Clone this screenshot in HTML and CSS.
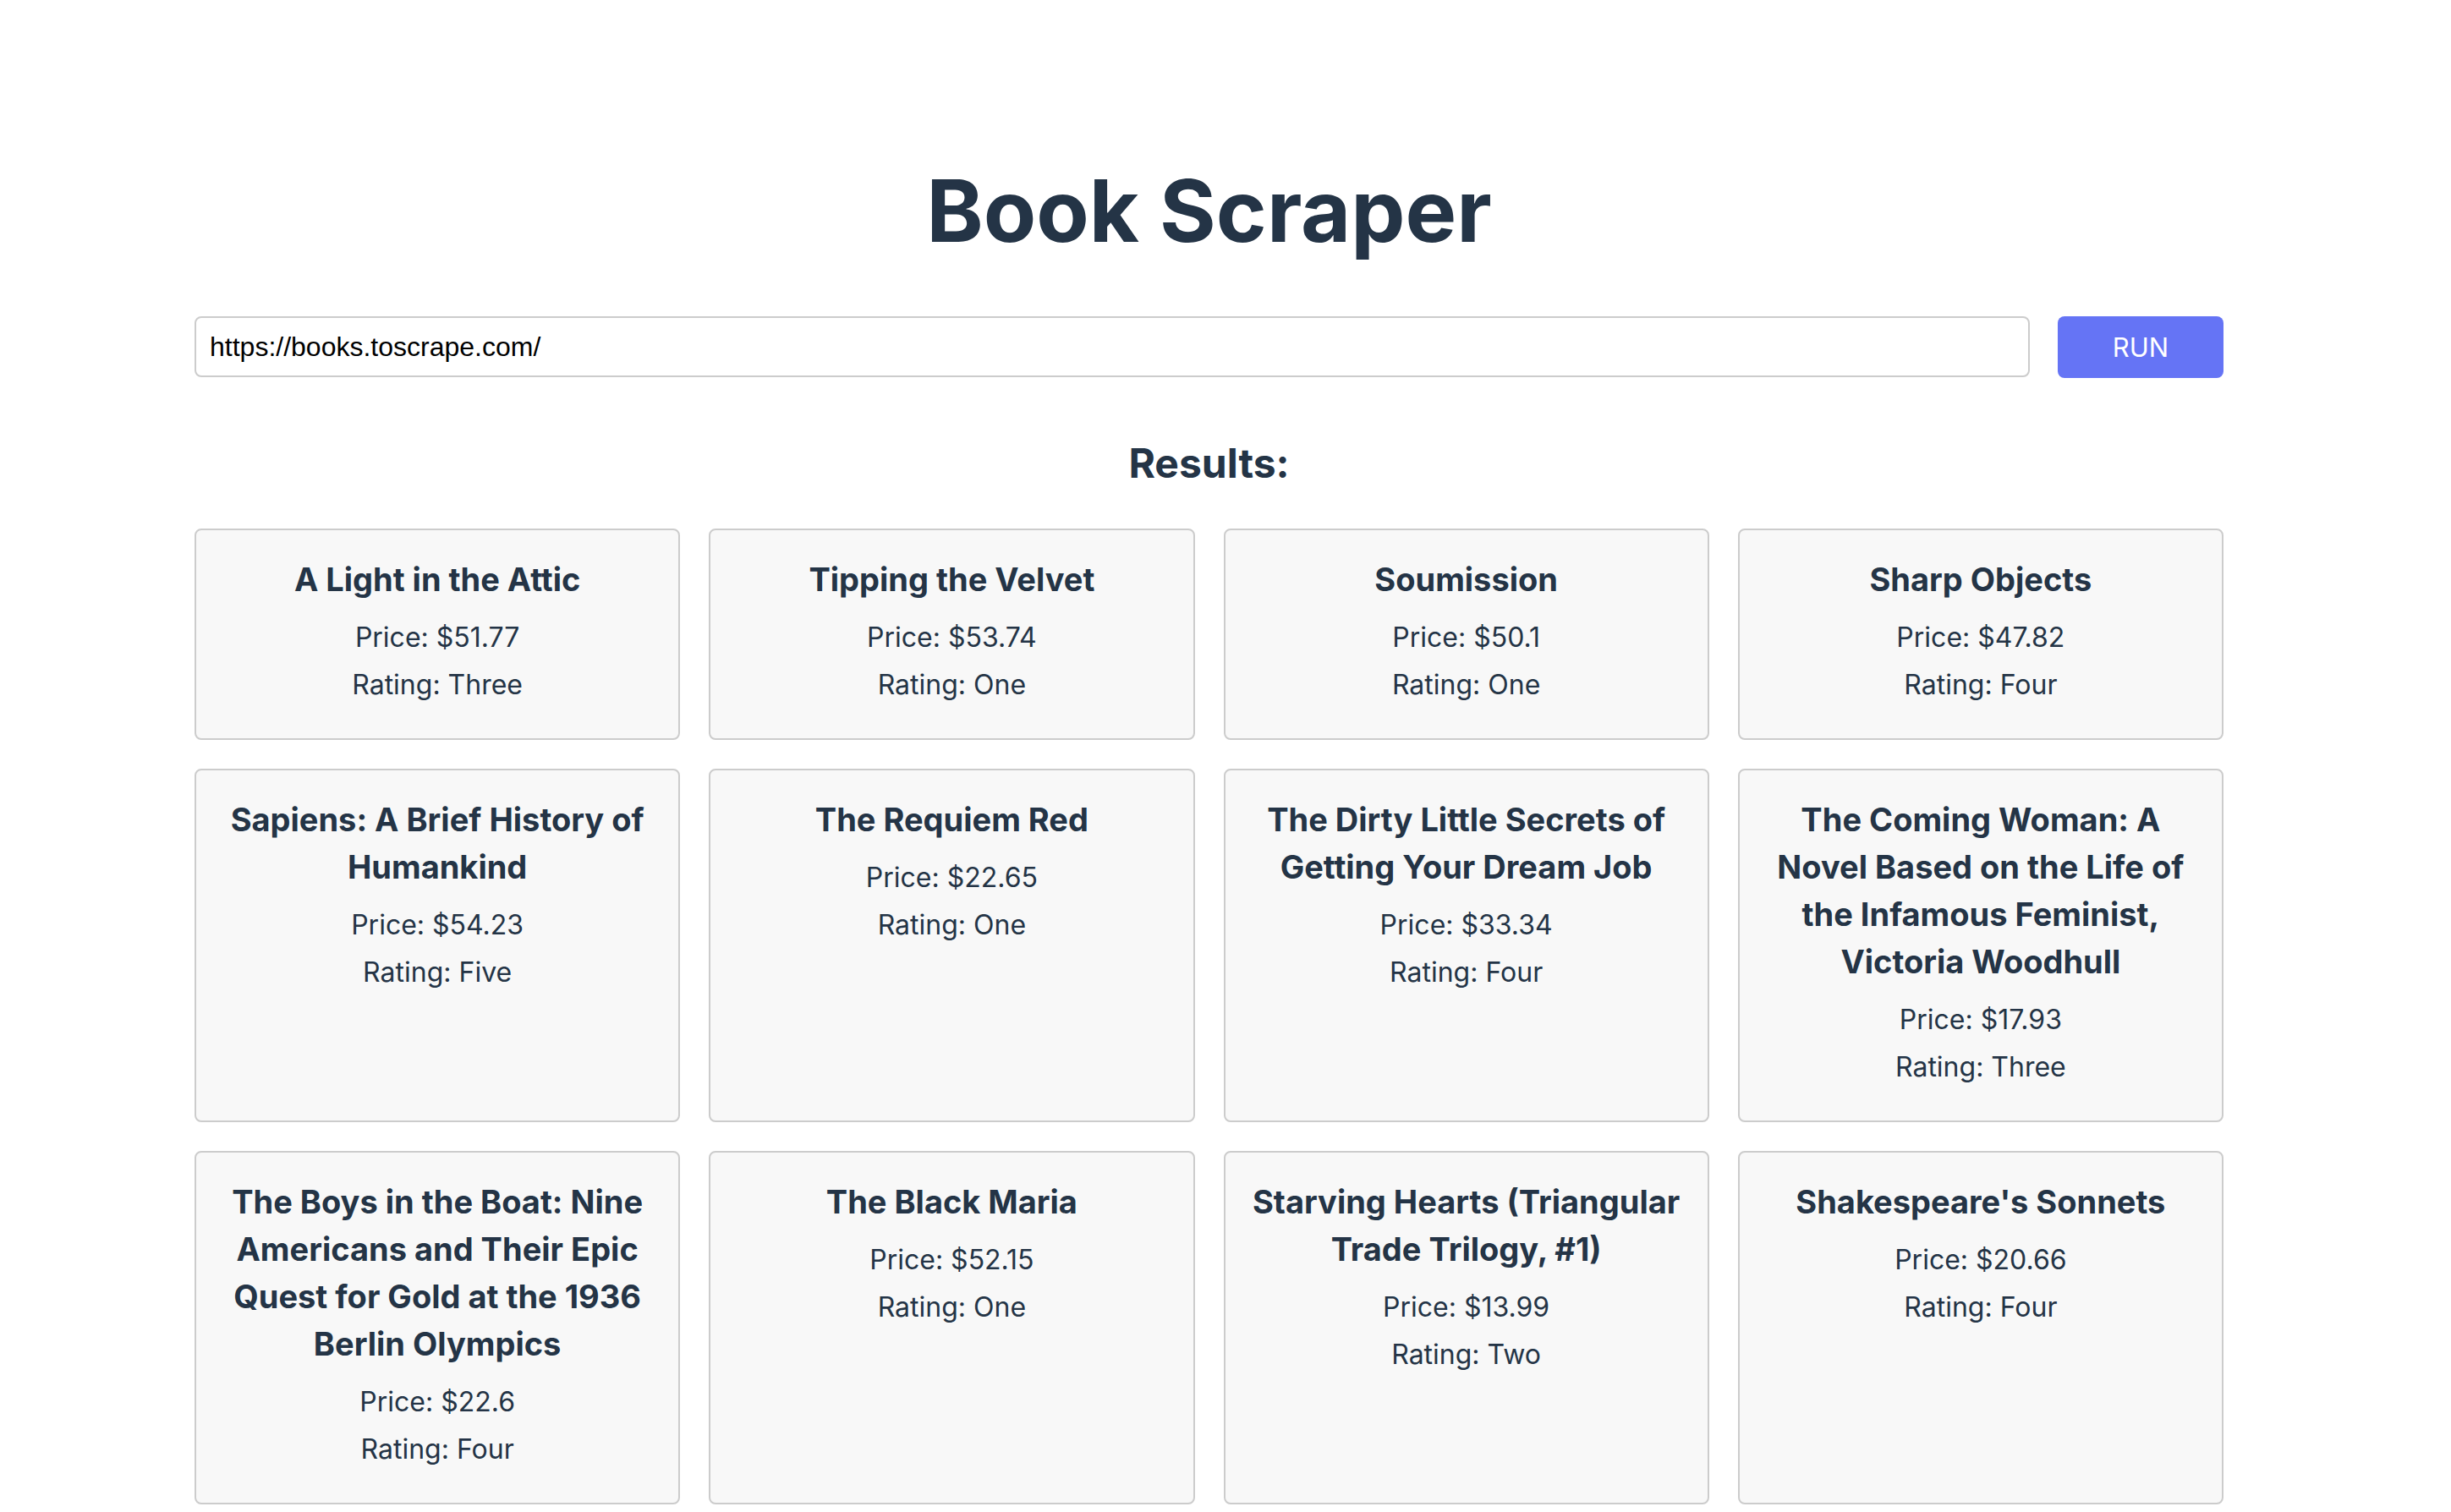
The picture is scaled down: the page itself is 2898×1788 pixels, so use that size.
FILE: index.html
```html
<!DOCTYPE html>
<html lang="en">
<head>
<meta charset="utf-8">
<title>Book Scraper</title>
<link rel="stylesheet" href="styles.css">
</head>
<body>
<main class="app">
  <h1 class="title">Book Scraper</h1>
  <form class="search" onsubmit="return false">
    <input class="url" type="text" value="https://books.toscrape.com/">
    <button class="run" type="submit">RUN</button>
  </form>
  <h2 class="results-title">Results:</h2>
  <section class="grid">
    <article class="card"><h3>A Light in the Attic</h3><p>Price: $51.77</p><p>Rating: Three</p></article>
    <article class="card"><h3>Tipping the Velvet</h3><p>Price: $53.74</p><p>Rating: One</p></article>
    <article class="card"><h3>Soumission</h3><p>Price: $50.1</p><p>Rating: One</p></article>
    <article class="card"><h3>Sharp Objects</h3><p>Price: $47.82</p><p>Rating: Four</p></article>
    <article class="card"><h3>Sapiens: A Brief History of Humankind</h3><p>Price: $54.23</p><p>Rating: Five</p></article>
    <article class="card"><h3>The Requiem Red</h3><p>Price: $22.65</p><p>Rating: One</p></article>
    <article class="card"><h3>The Dirty Little Secrets of Getting Your Dream Job</h3><p>Price: $33.34</p><p>Rating: Four</p></article>
    <article class="card"><h3>The Coming Woman: A Novel Based on the Life of the Infamous Feminist, Victoria Woodhull</h3><p>Price: $17.93</p><p>Rating: Three</p></article>
    <article class="card"><h3>The Boys in the Boat: Nine Americans and Their Epic Quest for Gold at the 1936 Berlin Olympics</h3><p>Price: $22.6</p><p>Rating: Four</p></article>
    <article class="card"><h3>The Black Maria</h3><p>Price: $52.15</p><p>Rating: One</p></article>
    <article class="card"><h3>Starving Hearts (Triangular Trade Trilogy, #1)</h3><p>Price: $13.99</p><p>Rating: Two</p></article>
    <article class="card"><h3>Shakespeare's Sonnets</h3><p>Price: $20.66</p><p>Rating: Four</p></article>
  </section>
</main>
</body>
</html>
```
FILE: styles.css
```css
html, body {
  margin: 0;
  padding: 0;
  background: #ffffff;
}

body {
  font-family: Inter, "Noto Sans", sans-serif;
  color: #243446;
}

.app {
  width: 2399px;
  margin-left: 230px;
  padding-top: 187px;
}

.title {
  margin: 0;
  font-size: 102px;
  line-height: 124px;
  font-weight: 700;
  text-align: center;
}

.search {
  margin: 63px 0 0;
  display: flex;
  gap: 33px;
  height: 73px;
}

.url {
  flex: 1;
  box-sizing: border-box;
  height: 72px;
  border: 2px solid #cccccc;
  border-radius: 8px;
  padding: 0 16px;
  font-family: "Liberation Sans", Arial, sans-serif;
  font-size: 32px;
  color: #000000;
  background: #ffffff;
  outline: none;
}

.run {
  width: 196px;
  height: 73px;
  border: none;
  border-radius: 8px;
  background: #6574f5;
  color: #ffffff;
  font-family: Inter, sans-serif;
  font-size: 31px;
  font-weight: 400;
  padding: 0;
}

.results-title {
  margin: 72px 0 49px;
  font-size: 48px;
  line-height: 57px;
  font-weight: 700;
  text-align: center;
}

.grid {
  display: grid;
  grid-template-columns: repeat(4, 1fr);
  gap: 34px;
}

.card {
  background: #f8f8f8;
  border: 2px solid #cccccc;
  border-radius: 8px;
  padding: 30px 30px 35px;
  text-align: center;
}

.card h3 {
  margin: 0 0 13px;
  font-size: 38px;
  line-height: 56px;
  font-weight: 700;
}

.card p {
  margin: 0;
  font-size: 32px;
  line-height: 56px;
  font-weight: 400;
}
```
